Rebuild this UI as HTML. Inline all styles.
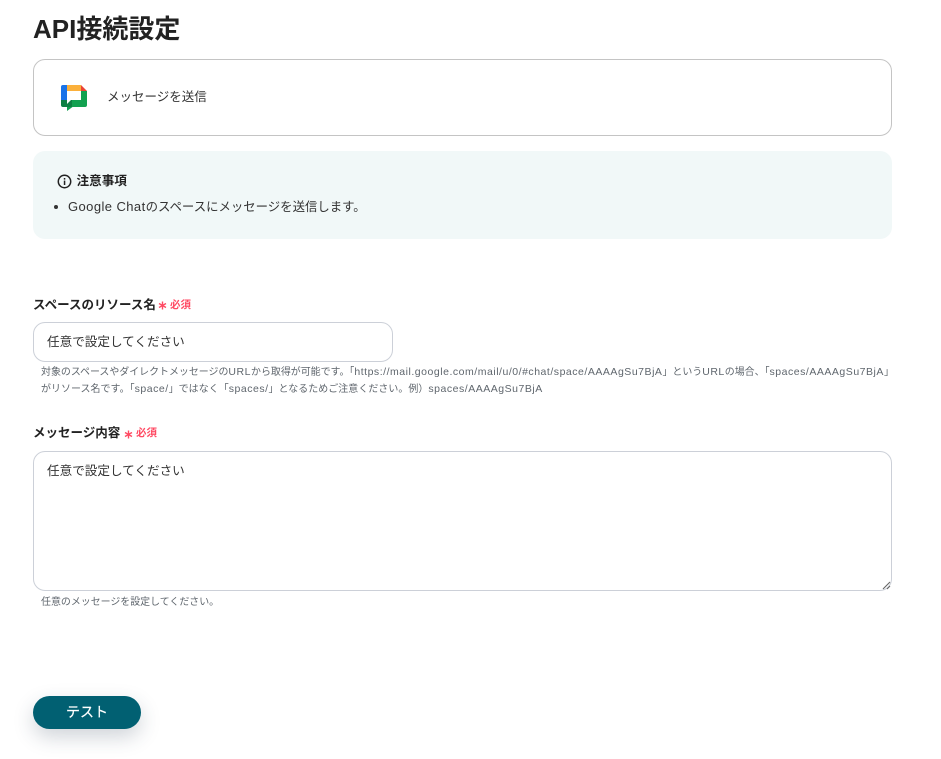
<!DOCTYPE html>
<html lang="ja">
<head>
<meta charset="utf-8">
<style>
html,body{margin:0;padding:0;background:#fff;width:941px;height:759px;overflow:hidden}
body{position:relative;font-family:"Liberation Sans","Noto Sans CJK JP",sans-serif;color:#2b2b2b}
.t{position:absolute;white-space:nowrap;line-height:1}
.box{position:absolute;box-sizing:border-box;background:#fff}
.lab{font-size:12.5px;font-weight:700;color:#222}
.req{font-size:10.5px;font-weight:700;color:#ff4a63}
.hint{font-size:9.95px;color:#5f666d}
.hint b{font-weight:400;font-size:10.5px;letter-spacing:.52px}
.ph{font-size:12.6px;color:#333}
.g{font-size:13px;letter-spacing:.42px}
</style>
</head>
<body>
<div class="t" style="left:33px;top:16px;font-size:26px;font-weight:700;color:#222">API接続設定</div>

<div class="box" style="left:33px;top:59px;width:859px;height:77px;border:1px solid #c4c4c4;border-radius:12px"></div>
<svg style="position:absolute;left:60px;top:84px" width="28" height="28" viewBox="0 0 28 28">
  <path d="M1 3a2 2 0 0 1 2-2h4v15H1z" fill="#1a73e8"/>
  <path d="M7 1h14v6H7z" fill="#fbb03b"/>
  <path d="M21 1l6 6h-6z" fill="#ea4335"/>
  <path d="M21 7h6v14a2 2 0 0 1-2 2H12.5L7 27V23h1l3-7h10z" fill="#12a150"/>
  <path d="M1 16h6v4l4-4h1v7H7H3a2 2 0 0 1-2-2z" fill="#0d8043"/>
</svg>
<div class="t" style="left:107px;top:91px;font-size:12.5px;color:#333">メッセージを送信</div>

<div class="box" style="left:33px;top:151px;width:859px;height:88px;background:#f1f8f8;border-radius:12px"></div>
<svg style="position:absolute;left:57px;top:174px" width="15" height="15" viewBox="0 0 15 15">
  <circle cx="7.5" cy="7.5" r="6.2" fill="none" stroke="#222" stroke-width="1.5"/>
  <rect x="6.8" y="6.6" width="1.5" height="4.4" fill="#222"/>
  <rect x="6.8" y="4" width="1.5" height="1.6" fill="#222"/>
</svg>
<div class="t" style="left:76.5px;top:174.5px;font-size:12.6px;font-weight:700;color:#222">注意事項</div>
<div style="position:absolute;left:54px;top:205px;width:4px;height:4px;border-radius:50%;background:#333"></div>
<div class="t" style="left:68px;top:200px;font-size:12.4px;color:#333"><span class="g">Google Chat</span>のスペースにメッセージを送信します。</div>

<div class="t lab" style="left:33px;top:299px">スペースのリソース名</div>
<svg style="position:absolute;left:158px;top:301px" width="9" height="9" viewBox="0 0 9 9"><path d="M4.5 .5v8M1 2.5l7 4M8 2.5l-7 4" stroke="#ff4a63" stroke-width="1.4" fill="none"/></svg>
<div class="t req" style="left:170px;top:300px">必須</div>
<div class="box" style="left:33px;top:322px;width:360px;height:40px;border:1px solid #ccd0d8;border-radius:12px"></div>
<div class="t ph" style="left:47px;top:336px">任意で設定してください</div>
<div class="t hint" style="left:41px;top:367px">対象のスペースやダイレクトメッセージの<b>URL</b>から取得が可能です。「<b>https://mail.google.com/mail/u/0/#chat/space/AAAAgSu7BjA</b>」という<b>URL</b>の場合、「<b>spaces/AAAAgSu7BjA</b>」</div>
<div class="t hint" style="left:41px;top:384px;letter-spacing:.07px">がリソース名です。「<b>space/</b>」ではなく「<b>spaces/</b>」となるためご注意ください。例）<b>spaces/AAAAgSu7BjA</b></div>

<div class="t lab" style="left:33px;top:427px">メッセージ内容</div>
<svg style="position:absolute;left:124px;top:430px" width="9" height="9" viewBox="0 0 9 9"><path d="M4.5 .5v8M1 2.5l7 4M8 2.5l-7 4" stroke="#ff4a63" stroke-width="1.4" fill="none"/></svg>
<div class="t req" style="left:136px;top:428px">必須</div>
<div class="box" style="left:33px;top:451px;width:859px;height:140px;border:1px solid #ccd0d8;border-radius:12px"></div>
<div class="t ph" style="left:47px;top:465px">任意で設定してください</div>
<svg style="position:absolute;left:882px;top:581px" width="9" height="9" viewBox="0 0 9 9">
  <path d="M1 8L8 1M5 8L8 5" stroke="#666" stroke-width="1.1" fill="none"/>
</svg>
<div class="t hint" style="left:41px;top:598px">任意のメッセージを設定してください。</div>

<div style="position:absolute;left:33px;top:696px;width:108px;height:33px;border-radius:17px;background:#016072;box-shadow:0 8px 20px rgba(40,60,80,.22);color:#fff;font-size:14px;font-weight:400;line-height:33px;text-align:center;-webkit-text-stroke:.2px #fff">テスト</div>
</body>
</html>
